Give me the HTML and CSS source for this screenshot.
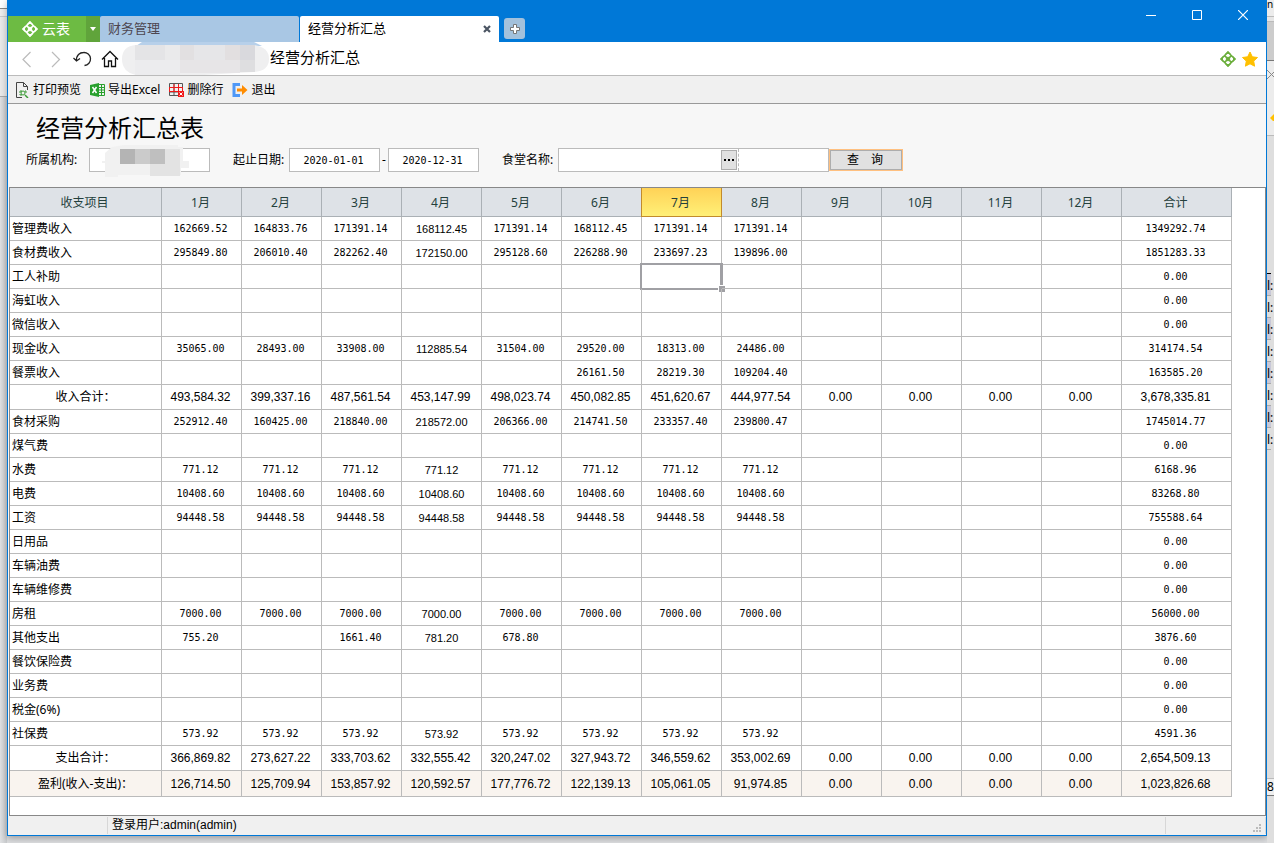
FILE: index.html
```html
<!DOCTYPE html>
<html lang="zh-CN">
<head>
    <meta charset="UTF-8">
    <meta name="viewport" content="width=device-width, initial-scale=1.0">
    <title>经营分析汇总</title>
    <link rel="stylesheet" href="styles.css">
</head>
<body>
    <svg width="0" height="0" class="symbols">
        <symbol id="clover" viewBox="0 0 16 16">
            <path fill="none" stroke="currentColor" stroke-width="1.6" d="M8 1.200L14.800 8 8 14.800 1.200 8zM4.600 4.600l6.800 6.800M11.400 4.600l-6.800 6.800"/>
            <path fill="currentColor" d="M8 5.500L10.500 8 8 10.500 5.500 8zM8 0l3 3H5zM8 16l3-3H5zM0 8l3-3v6zM16 8l-3-3v6z"/>
        </symbol>
    </svg>

    <div class="behind-left"><div class="behind-panel"></div></div>

    <div class="window">
        <header class="title-bar">
            <div class="tabs">
                <button class="brand"><svg width="16" height="16"><use href="#clover"/></svg>云表</button>
                <button class="brand-menu" aria-label="菜单"><svg width="6" height="4"><path d="M0 0h6L3 4z" fill="#fff"/></svg></button>
                <button class="tab">财务管理</button>
                <div class="tab active">
                    <span>经营分析汇总</span>
                    <button class="icon-button" aria-label="关闭标签"><svg width="8" height="8"><path d="M1 1l6 6M7 1L1 7" stroke="#4b5563" stroke-width="2.200"/></svg></button>
                </div>
                <button class="new-tab" aria-label="新标签"><svg width="12" height="12"><path d="M4.500 1.500h3v3h3v3h-3v3h-3v-3h-3v-3h3z" fill="#fff" stroke="#777"/></svg></button>
            </div>
            <div class="window-buttons">
                <button class="icon-button" aria-label="最小化"><svg width="10" height="10"><path d="M0 5.500h10" stroke="#fff"/></svg></button>
                <button class="icon-button" aria-label="最大化"><svg width="10" height="10"><path d="M.5.5h9v9h-9z" fill="none" stroke="#fff"/></svg></button>
                <button class="icon-button" aria-label="关闭"><svg width="10" height="10"><path d="M0 0l10 10M10 0L0 10" stroke="#fff" stroke-width="1.200"/></svg></button>
            </div>
        </header>

        <nav class="address-bar">
            <button class="icon-button" aria-label="后退"><svg width="20" height="18"><path d="M14.500 2L7 9.500l7.500 7.500" fill="none" stroke="#bbb" stroke-width="1.200"/></svg></button>
            <button class="icon-button" aria-label="前进"><svg width="20" height="18"><path d="M8 2l7.500 7.500L8 17" fill="none" stroke="#bbb" stroke-width="1.200"/></svg></button>
            <button class="icon-button" aria-label="刷新"><svg width="20" height="18"><path d="M4.500 11C4 5 8 2.500 11.500 2.500a6.500 6.500 0 0 1 1 13M1.500 8l3 3L8 8.500" fill="none" stroke="#222" stroke-width="1.300"/></svg></button>
            <button class="icon-button" aria-label="主页"><svg width="20" height="18"><path d="M2 9.500L10 1.500l8 8M4.500 8v8.500h4V11h3v5.500h4V8" fill="none" stroke="#111" stroke-width="1.300"/></svg></button>
            <svg class="mosaic" width="148" height="34">
                <path d="M20 0h112l8 4H14z" fill="#b7d0ea"/>
                <path d="M14 3h118q15 2 15 14t-15 13l-50 3H14Q0 30 0 17T14 3z" fill="#efeff0"/>
                <path d="M13 3h30v15H13z" fill="#e4e4e6"/><path d="M43 3h15v15H43z" fill="#eaeaeb"/><path d="M58 3h14v15H58z" fill="#e2e0e1"/>
                <path d="M72 3h31v15H72z" fill="#e6e6e8"/><path d="M103 3h15v15h-15z" fill="#e2dfe0"/><path d="M118 3h15v15h-15z" fill="#d9d9dd"/>
                <path d="M13 18h45v15H13z" fill="#ececee"/><path d="M58 18h60v13H58z" fill="#e7e5e7"/><path d="M118 18h15v12h-15z" fill="#dedee0"/>
            </svg>
            <span class="address">经营分析汇总</span>
            <div class="marks">
                <svg class="green" width="16" height="16"><use href="#clover"/></svg>
                <svg width="16" height="16"><path d="M8 1l2.300 4.800 5.200.7-3.800 3.600.9 5.100L8 12.800l-4.600 2.400.9-5.100L.5 6.500l5.200-.7z" fill="#ffc000" stroke="#ffc000" stroke-linejoin="round"/></svg>
            </div>
        </nav>

        <div class="toolbar">
            <button class="tool"><svg width="15" height="16"><path d="M7 15.500H1.500V.5h7l4 4V8M8.500.5v4h4" fill="none" stroke="#444"/><path d="M5 11V9h2m3 0h1v2m-6 1v1h2" fill="none" stroke="#3a9b35"/><circle cx="8" cy="11" r="2" fill="none" stroke="#3a9b35"/><path d="M10 13l3 3" stroke="#3a9b35" stroke-width="1.500"/></svg>打印预览</button>
            <button class="tool"><svg width="15" height="16"><path d="M0 3l9-2v14l-9-2z" fill="#28a02d"/><path d="M2.500 5l4 6m0-6l-4 6" stroke="#fff" stroke-width="1.500"/><path d="M9 2.500h5.500v11H9M9 5.500h5M9 8h5M9 10.500h5M11.500 3v10" fill="none" stroke="#28a02d"/></svg>导出Excel</button>
            <button class="tool"><svg width="15" height="16"><path d="M.5 1.500h13v12H.5zM5 2v12M9.500 2v12M0 10h14" fill="none" stroke="#555"/><path d="M0 5.500h14M5 2v8M9.500 2v8M0 9.500h9M.5 5v5M13.500 5v4" stroke="#f01818"/><path d="M9 9h6v6H9z" fill="#f01818"/><path d="M10.500 10.500l3 3m0-3l-3 3" stroke="#fff"/></svg>删除行</button>
            <button class="tool"><svg width="16" height="16"><path d="M8 2.500H2v11h6" fill="none" stroke="#4f98f7" stroke-width="3"/><path d="M5 6.500h5V3l5.500 5L10 13V9.500H5z" fill="#ff8c00"/></svg>退出</button>
        </div>

        <main>
            <form class="query" onsubmit="return false">
                <h1>经营分析汇总表</h1>
                <div class="fields">
                    <label for="org">所属机构:</label>
                    <div class="org">
                        <input id="org" type="text">
                        <svg class="org-mosaic" width="88" height="34"><path d="M10 2l12-2h54v2h5v14h6v7h-8v7H16v2H3V18H0v-2h3V8z" fill="#f1f1f1"/><path d="M18 4h15v15H18z" fill="#b4b4b4"/><path d="M33 4h15v15H33z" fill="#cbcbcb"/><path d="M48 4h15v15H48z" fill="#bfbfbf"/><path d="M63 4h15v15H63zM48 19h30v12H48z" fill="#e3e3e3"/></svg>
                    </div>
                    <label for="from">起止日期:</label>
                    <input id="from" class="date" type="text" value="2020-01-01">
                    <span class="dash">-</span>
                    <input class="date" type="text" value="2020-12-31" aria-label="截止日期">
                    <label for="canteen">食堂名称:</label>
                    <div class="picker">
                        <input id="canteen" type="text">
                        <button type="button" class="more" aria-label="选择"><svg width="12" height="2"><path d="M1 0h2v2H1zM5 0h2v2H5zM9 0h2v2H9z"/></svg></button>
                        <input type="text" class="picked" aria-label="食堂">
                    </div>
                    <button type="submit" class="search">查　询</button>
                </div>
            </form>

            <div class="grid">
                <table>
                    <colgroup id="cols"></colgroup>
                    <thead><tr id="head"></tr></thead>
                    <tbody id="rows"></tbody>
                </table>
            </div>
        </main>

        <footer class="status-bar">
            <span class="status-cell"></span>
            <span class="status-cell user">登录用户:admin(admin)</span>
            <span class="status-cell grip"><svg width="9" height="9"><path d="M6 0h2v2H6zM3 3h2v2H3zM6 3h2v2H6zM0 6h2v2H0zM3 6h2v2H3zM6 6h2v2H6z" fill="#bbb"/></svg></span>
        </footer>
    </div>

    <div class="behind-right">
        <div class="behind-title">n</div>
        <div class="behind-tools"><svg width="7" height="60"><path d="M0 9l7 7M0 18l7-7" stroke="#888"/><path d="M3 57l4-4v8z" fill="#ffc000"/></svg></div>
        <ul class="behind-list"><li>l:</li><li>l:</li><li>l:</li><li>l:</li><li>l:</li><li>l:</li><li>l:</li><li>l:</li></ul>
        <div class="behind-tip">8</div>
    </div>

    <script src="script.js"></script>
</body>
</html>
```

FILE: styles.css
```css
* {
    box-sizing: border-box;
}
body {
    margin: 0;
    min-height: 100vh;
    display: flex;
    background-color: #dcdddf;
    color: #000;
    font-family: "Noto Sans", "Noto Sans CJK SC", sans-serif;
    font-size: 12px;
    line-height: 16px;
}
button, input {
    font: inherit;
    color: inherit;
    margin: 0;
    padding: 0;
    border: none;
    border-radius: 0;
}
button {
    background: none;
    display: flex;
    align-items: center;
    justify-content: center;
}
svg {
    flex: none;
    display: block;
}
.symbols {
    position: absolute;
}

/* windows behind */
.behind-left, .behind-right {
    flex: none;
    width: 7px;
}
.behind-left {
    background: linear-gradient(to right, #e0e1e3, #c9cbcd);
}
.behind-panel {
    height: 97px;
    background: linear-gradient(#fff 8px, #888 8px, #888 9px, #eee 9px, #eee 16px, #ccc 16px, #ccc 17px, #eaeaea 17px);
    border-bottom: 1px solid #aaa;
}
.behind-right {
    background-color: #dedede;
}
.behind-title {
    height: 61px;
    line-height: 8px;
    font-size: 10px;
    background: linear-gradient(#ececec 16px, #bbb 16px, #bbb 17px, #e6e6e6 17px, #e6e6e6 21px, #aaa 21px, #ccc 22px, #ccc);
    border-bottom: 1px solid #777;
}
.behind-tools {
    height: 75px;
    background-color: #ececec;
    border-bottom: 1px solid #bbb;
}
.behind-list {
    list-style: none;
    margin: 137px 3px 0 0;
    padding: 0;
    border-top: 1px solid #000;
}
.behind-list li {
    height: 22px;
    padding-top: 4px;
    line-height: 16px;
    border-bottom: 1px solid #aaa;
}
.behind-list li:nth-child(odd) {
    background-color: #c8c8d8;
}
.behind-tip {
    margin-top: 328px;
    height: 18px;
    background-color: #eee;
    border-top: 1px solid #bbb;
    border-bottom: 1px solid #777;
}

.window {
    flex: 1;
    min-width: 0;
    display: flex;
    flex-direction: column;
    margin-bottom: 7px;
    border: solid #0078d7;
    border-width: 0 1px 1px;
    background-color: #f0f0f0;
    box-shadow: 0 2px 7px rgba(0, 0, 0, 0.3);
}

/* title bar and tabs */
.title-bar {
    display: flex;
    justify-content: space-between;
    height: 42px;
    background-color: #0078d7;
}
.tabs {
    display: flex;
    margin-top: 16px;
    font-size: 13px;
}
.brand {
    width: 78px;
    padding-right: 2px;
    gap: 4px;
    background-color: #6dbb43;
    color: #fff;
    font-size: 14px;
}
.brand-menu {
    width: 14px;
    background-color: #60a43b;
}
.tab {
    display: flex;
    align-items: center;
    justify-content: flex-start;
    width: 199px;
    padding: 0 8px 2px;
    background-color: #a9c7e4;
    border-radius: 2px 2px 0 0;
    color: #4d4650;
}
.tab.active {
    justify-content: space-between;
    background-color: #fff;
    color: #000;
    margin-left: 1px;
}
.tab .icon-button {
    padding-top: 2px;
}
.new-tab {
    width: 21px;
    height: 21px;
    margin: 2px 0 0 5px;
    border-radius: 3px;
    background-color: #a3c1dc;
}
.window-buttons {
    display: flex;
    gap: 36px;
    padding: 10px 18px 0 0;
    align-items: flex-start;
}

.address-bar {
    display: flex;
    align-items: center;
    height: 34px;
    gap: 8px;
    padding: 0 8px;
    background-color: #fff;
    border-bottom: 1px solid #bbb;
}
.mosaic {
    margin: 0 -8px 0 -6px;
}
.address {
    flex: 1;
    font-size: 15px;
    line-height: 20px;
    padding-bottom: 3px;
}
.marks {
    display: flex;
    gap: 6px;
}
.green {
    color: #6bae3c;
}

.toolbar {
    display: flex;
    gap: 9px;
    height: 28px;
    padding: 0 7px;
    border-bottom: 1px solid #999;
}
.tool {
    gap: 3px;
}

main {
    flex: 1;
    display: flex;
    flex-direction: column;
    background-color: #f7f7f7;
}

/* query form */
.query {
    height: 83px;
    padding-top: 8px;
}
.query h1 {
    margin: 0 0 4px 28px;
    font-size: 24px;
    line-height: 32px;
    font-weight: normal;
}
.fields {
    display: flex;
    align-items: center;
    height: 24px;
    padding-left: 18px;
}
.fields label {
    flex: none;
    width: 56px;
}
.fields input {
    height: 24px;
    background-color: #fff;
    border: 1px solid #bbb;
}
.org {
    position: relative;
    width: 121px;
    margin: 0 23px 0 7px;
}
.org input {
    display: block;
    width: 100%;
}
.org-mosaic {
    position: absolute;
    left: 13px;
    top: -3px;
}
.fields .date {
    width: 91px;
    padding-right: 2px;
    text-align: center;
    font: 10px "DejaVu Sans Mono", monospace;
}
.dash {
    width: 8px;
    text-align: center;
}
.date + label {
    margin-left: 23px;
}
.picker {
    display: flex;
    align-items: center;
    width: 271px;
    height: 24px;
    background-color: #fff;
    border: 1px solid #bbb;
}
.picker input {
    flex: 1;
    min-width: 0;
    height: 22px;
    border: none;
}
.more {
    width: 16px;
    height: 20px;
    background-color: #e1e1e1;
    border: 1px solid #adadad;
}
.picker .picked {
    flex: none;
    width: 90px;
    margin-left: 1px;
    border-left: 1px dashed #bbb;
}
.search {
    width: 74px;
    height: 22px;
    padding-right: 2px;
    background-color: #e1e1e1;
    outline: 1px solid #ffc080;
    outline-offset: -1px;
    box-shadow: inset 0 0 0 2px #adadad;
}

/* report */
.grid {
    flex: 1;
    margin-left: 1px;
    border: 1px solid #888;
    background-color: #fff;
    overflow: hidden;
}
table {
    table-layout: fixed;
    width: 1222px;
    border-collapse: separate;
    border-spacing: 0;
}
.col-name {
    width: 152px;
}
.col-month {
    width: 80px;
}
.col-sum {
    width: 110px;
}
th, td {
    position: relative;
    padding: 0 2px 0 0;
    height: 24px;
    line-height: 16px;
    text-align: center;
    font-weight: normal;
    border: solid #bbb;
    border-width: 0 1px 1px 0;
}
thead th {
    height: 29px;
    padding-top: 2px;
    background-color: #dee2e7;
    border-color: #aab0b5;
    color: #24403c;
}
thead .current {
    background: linear-gradient(#ffd257, #fff077);
    border-color: #c28b2c;
    box-shadow: -1px 0 #c28b2c;
}
tbody th {
    padding-left: 2px;
    text-align: left;
}
td {
    font-family: "DejaVu Sans Mono", monospace;
    font-size: 10px;
}
td.narrow {
    padding-right: 0;
    font-family: "Liberation Sans", sans-serif;
    font-size: 11px;
}
.total th {
    height: 25px;
    text-align: center;
}
.total td {
    font-family: "Liberation Sans", sans-serif;
    font-size: 12px;
}
.profit th {
    height: 26px;
}
.profit th, .profit td {
    background-color: #f9f4ef;
}
.selected::before {
    content: "";
    position: absolute;
    inset: -2px;
    border: 3px solid #a0a0a4;
    border-width: 2px 3px 2px 2px;
}
.selected::after {
    content: "";
    position: absolute;
    right: -4px;
    bottom: -4px;
    width: 6px;
    height: 6px;
    background-color: #a0a0a4;
    border: solid #fff;
    border-width: 1px 0 0 1px;
}

.status-bar {
    display: flex;
    align-items: stretch;
    height: 19px;
    padding: 1px 0;
}
.status-cell {
    width: 100px;
    border-right: 1px solid #d7d7d7;
}
.status-cell.user {
    flex: 1;
    padding-left: 4px;
    font-family: "Liberation Sans", "Noto Sans CJK SC", sans-serif;
}
.status-cell.grip {
    display: flex;
    justify-content: flex-end;
    align-items: flex-end;
    padding: 0 3px 1px 0;
}
```

FILE: script.js
```js
const months = 12;
const currentMonth = 7;

// [name, monthly values, sum, row class]
const report = [
    ['管理费收入', ['162669.52', '164833.76', '171391.14', '168112.45', '171391.14', '168112.45', '171391.14', '171391.14'], '1349292.74'],
    ['食材费收入', ['295849.80', '206010.40', '282262.40', '172150.00', '295128.60', '226288.90', '233697.23', '139896.00'], '1851283.33'],
    ['工人补助', [], '0.00'],
    ['海虹收入', [], '0.00'],
    ['微信收入', [], '0.00'],
    ['现金收入', ['35065.00', '28493.00', '33908.00', '112885.54', '31504.00', '29520.00', '18313.00', '24486.00'], '314174.54'],
    ['餐票收入', ['', '', '', '', '', '26161.50', '28219.30', '109204.40'], '163585.20'],
    ['收入合计：', ['493,584.32', '399,337.16', '487,561.54', '453,147.99', '498,023.74', '450,082.85', '451,620.67', '444,977.54', '0.00', '0.00', '0.00', '0.00'], '3,678,335.81', 'total'],
    ['食材采购', ['252912.40', '160425.00', '218840.00', '218572.00', '206366.00', '214741.50', '233357.40', '239800.47'], '1745014.77'],
    ['煤气费', [], '0.00'],
    ['水费', Array(8).fill('771.12'), '6168.96'],
    ['电费', Array(8).fill('10408.60'), '83268.80'],
    ['工资', Array(8).fill('94448.58'), '755588.64'],
    ['日用品', [], '0.00'],
    ['车辆油费', [], '0.00'],
    ['车辆维修费', [], '0.00'],
    ['房租', Array(8).fill('7000.00'), '56000.00'],
    ['其他支出', ['755.20', '', '1661.40', '781.20', '678.80'], '3876.60'],
    ['餐饮保险费', [], '0.00'],
    ['业务费', [], '0.00'],
    ['税金(6%)', [], '0.00'],
    ['社保费', Array(8).fill('573.92'), '4591.36'],
    ['支出合计：', ['366,869.82', '273,627.22', '333,703.62', '332,555.42', '320,247.02', '327,943.72', '346,559.62', '353,002.69', '0.00', '0.00', '0.00', '0.00'], '2,654,509.13', 'total'],
    ['盈利(收入-支出)：', ['126,714.50', '125,709.94', '153,857.92', '120,592.57', '177,776.72', '122,139.13', '105,061.05', '91,974.85', '0.00', '0.00', '0.00', '0.00'], '1,023,826.68', 'total profit']
];

let cols = '<col class="col-name">';
let head = '<th>收支项目</th>';
for (let m = 1; m <= months; m++) {
    cols += '<col class="col-month">';
    head += `<th class="${m === currentMonth ? 'current' : ''}">${m}月</th>`;
}
document.getElementById('cols').innerHTML = cols + '<col class="col-sum">';
document.getElementById('head').innerHTML = head + '<th>合计</th>';

document.getElementById('rows').innerHTML = report.map(([name, values, sum, cls = ''], row) => {
    let cells = '';
    for (let m = 1; m <= months; m++) {
        let cellClass = m === 4 ? 'narrow' : '';
        if (row === 2 && m === currentMonth) cellClass = 'selected';
        if (cls) cellClass = '';
        cells += `<td class="${cellClass}">${values[m - 1] || ''}</td>`;
    }
    return `<tr class="${cls}"><th>${name}</th>${cells}<td>${sum}</td></tr>`;
}).join('');
```
